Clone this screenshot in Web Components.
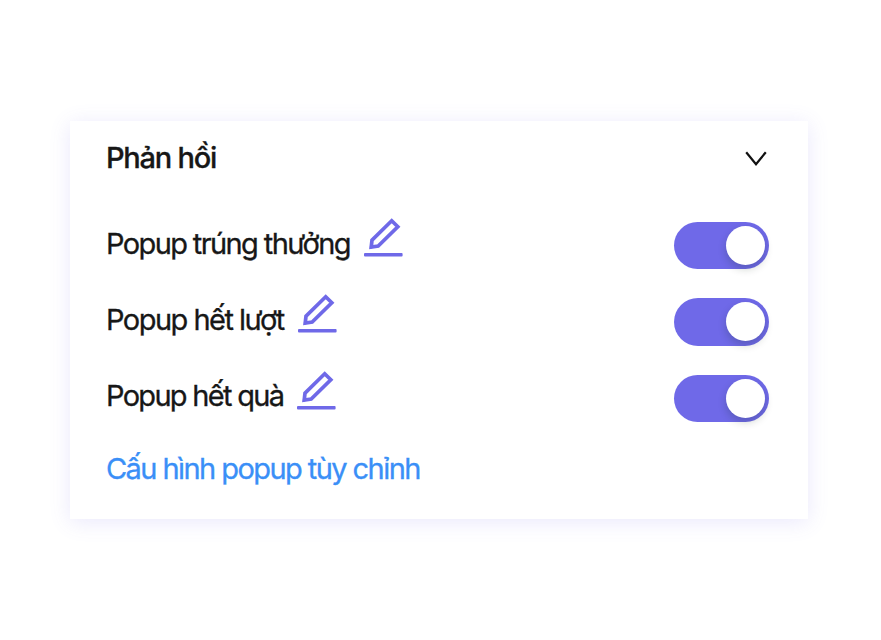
<!DOCTYPE html>
<html lang="vi"><head><meta charset="utf-8"><title>Phản hồi</title>
<style>body{margin:0;background:#fff}</style></head><body>
<feedback-page></feedback-page>
<script>
const define=(name,html)=>customElements.define(name,class extends HTMLElement{
  constructor(){super();this.attachShadow({mode:'open'}).innerHTML=html;}
});
define('edit-icon',`<style>:host{display:block;width:39px;height:39px}svg{display:block}</style>
<svg width="39" height="39" viewBox="0 0 39 39" fill="none" stroke="#6f69e8" stroke-width="3.7"><path d="M27.7 2.8 33.8 8.8 14.2 28.1 7.2 29 8 22.2Z" stroke-linejoin="miter"/><path d="M7.3 29 7.4 28.9" stroke-linecap="round" stroke-width="3"/><rect x="0" y="35" width="38.6" height="3.6" rx="1" fill="#6f69e8" stroke="none"/></svg>`);
define('chevron-icon',`<style>:host{display:block;width:24px;height:18px}svg{display:block}</style>
<svg width="24" height="18" viewBox="0 0 24 18" fill="none" stroke="#111" stroke-width="2.2"><path d="M2.2 2.2 12 14.2 21.8 2.2"/></svg>`);
define('toggle-switch',`<style>:host{display:flex;box-sizing:border-box;width:94.8px;height:47.4px;border-radius:24px;background:#6f69e8;padding:4.2px;justify-content:flex-end}
i{width:39px;height:39px;border-radius:50%;background:#fff;box-shadow:0 4px 8px rgba(0,35,11,.2)}</style><i></i>`);
define('popup-option',`<style>:host{display:flex;height:76.3px;align-items:flex-start}
.t{line-height:48px;padding-top:19.7px;white-space:nowrap;margin-right:14px}
edit-icon{margin-top:18px}toggle-switch{margin-left:auto;margin-top:22px}</style>
<div class="t"><slot></slot></div><edit-icon></edit-icon><toggle-switch></toggle-switch>`);
define('feedback-page',`<style>
:host{display:block;box-sizing:border-box;width:881px;height:640px;padding:121px 73px 0 70px;overflow:hidden;font:400 29px/48px Inter,"Liberation Sans",sans-serif;color:#171717;-webkit-text-stroke:.3px}
.card{box-sizing:border-box;height:398px;background:#fff;box-shadow:0 3px 20px rgba(105,90,235,.14);padding:0 39px 0 36px}
header{display:flex;justify-content:space-between;height:79px;font-weight:500}
h2{font:inherit;margin:13px 0 0;letter-spacing:-1.25px}
chevron-icon{margin:28.6px 1px 0 0}
popup-option{letter-spacing:-1.62px}
popup-option:nth-of-type(2){letter-spacing:-1.52px}
popup-option:nth-of-type(3){letter-spacing:-1.7px}
a{display:block;color:#3a8ff7;letter-spacing:-1.57px;padding-top:16px;white-space:nowrap}
</style><section class="card"><header><h2>Phản hồi</h2><chevron-icon></chevron-icon></header>
<popup-option>Popup trúng thưởng</popup-option><popup-option>Popup hết lượt</popup-option><popup-option>Popup hết quà</popup-option><a>Cấu hình popup tùy chỉnh</a></section>`);
</script></body></html>
